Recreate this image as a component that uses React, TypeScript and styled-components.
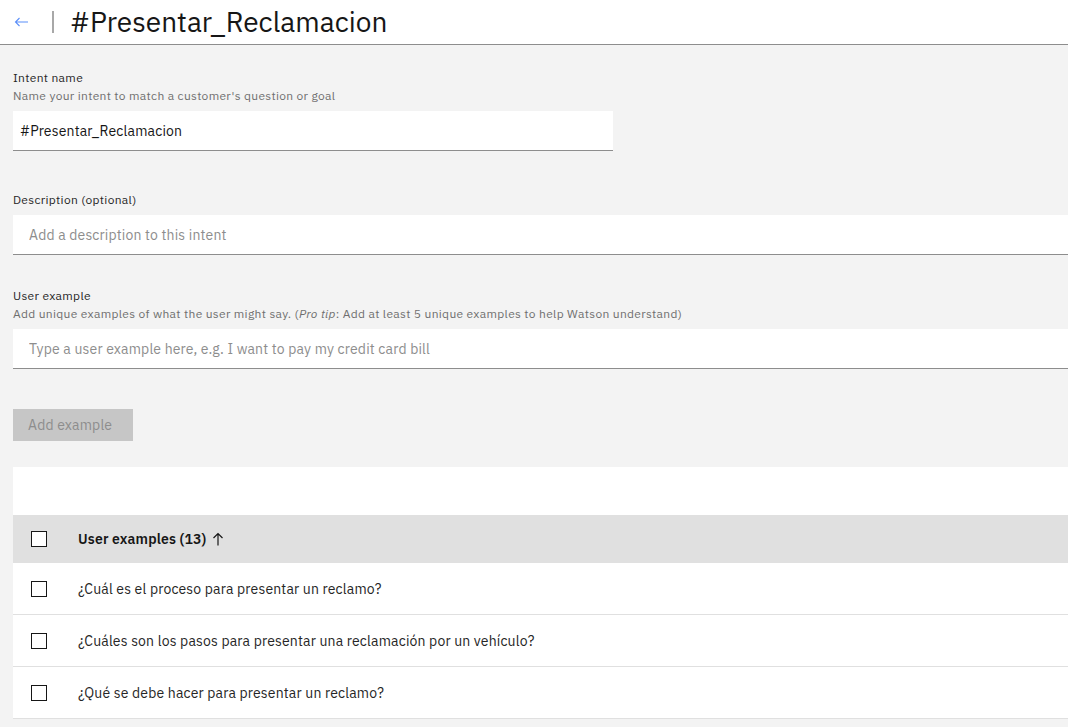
import React from "react";
import styled, { createGlobalStyle } from "styled-components";

const Global = createGlobalStyle`
  html, body { margin: 0; padding: 0; }
  body {
    background: #f3f3f3;
    font-family: "IBM Plex Sans", "Noto Sans", Roboto, sans-serif;
    color: #161616;
    overflow: hidden;
  }
  * { box-sizing: border-box; }
`;

const Header = styled.header`
  height: 45px;
  background: #ffffff;
  border-bottom: 1px solid #8d8d8d;
  display: flex;
  align-items: center;
`;

const BackButton = styled.button`
  border: none;
  background: transparent;
  padding: 0;
  margin-left: 13px;
  width: 16px;
  height: 16px;
  display: flex;
  align-items: center;
  justify-content: center;
  cursor: pointer;
`;

const Divider = styled.span`
  width: 2px;
  height: 22px;
  background: #a8a8a8;
  margin: 0 16px 0 23px;
`;

const Title = styled.h1`
  margin: 0;
  font-size: 28px;
  font-weight: 400;
  letter-spacing: 0;
  color: #161616;
  line-height: 36px;
`;

const Main = styled.main`
  padding: 25px 0 0 13px;
  display: flex;
  flex-direction: column;
`;

const Field = styled.section<{ $top: number }>`
  margin-top: ${(p) => p.$top}px;
  display: flex;
  flex-direction: column;
`;

const Label = styled.label`
  font-size: 12px;
  line-height: 16px;
  letter-spacing: 0.32px;
  color: #262626;
`;

const Helper = styled.div`
  font-size: 12px;
  line-height: 16px;
  letter-spacing: 0.32px;
  color: #6f6f6f;
  margin-top: 2px;
`;

const Input = styled.input<{ $width?: string }>`
  margin-top: 7px;
  width: ${(p) => p.$width || "calc(100% + 20px)"};
  height: 40px;
  border: none;
  border-bottom: 1px solid #8d8d8d;
  background: #ffffff;
  font-family: inherit;
  font-size: 14px;
  letter-spacing: 0.16px;
  color: #161616;
  padding: 0 16px;
  outline: none;
  &::placeholder { color: #8d8d8d; }
`;

const NameInput = styled(Input)`
  padding: 0 7px;
`;

const AddButton = styled.button`
  margin-top: 40px;
  width: 120px;
  height: 32px;
  border: none;
  background: #c6c6c6;
  color: #8d8d8d;
  font-family: inherit;
  font-size: 14px;
  letter-spacing: 0.16px;
  text-align: left;
  padding: 0 15px;
`;

const Table = styled.div`
  margin-top: 26px;
  background: #ffffff;
  width: calc(100% + 20px);
`;

const Toolbar = styled.div`
  height: 48px;
`;

const Row = styled.div<{ $head?: boolean }>`
  display: flex;
  align-items: center;
  height: ${(p) => (p.$head ? 48 : 52)}px;
  background: ${(p) => (p.$head ? "#e0e0e0" : "#ffffff")};
  border-bottom: ${(p) => (p.$head ? "none" : "1px solid #e0e0e0")};
  font-size: 14px;
  letter-spacing: 0.16px;
  font-weight: ${(p) => (p.$head ? 600 : 400)};
  color: ${(p) => (p.$head ? "#161616" : "#262626")};
`;

const CheckCell = styled.div`
  width: 65px;
  padding-left: 18px;
  display: flex;
  align-items: center;
`;

const Box = styled.span`
  width: 16px;
  height: 16px;
  border: 1px solid #161616;
  background: #ffffff;
  display: inline-block;
`;

const HeadText = styled.span`
  display: inline-flex;
  align-items: center;
  gap: 6px;
`;

const examples = [
  "¿Cuál es el proceso para presentar un reclamo?",
  "¿Cuáles son los pasos para presentar una reclamación por un vehículo?",
  "¿Qué se debe hacer para presentar un reclamo?",
];

export default function App() {
  return (
    <>
      <Global />
      <Header>
        <BackButton aria-label="Back">
          <svg width="15" height="10" viewBox="0 0 15 10" fill="none">
            <path d="M14 5H1.5M5.5 1L1.5 5l4 4" stroke="#5b8ff9" strokeWidth="1.1" />
          </svg>
        </BackButton>
        <Divider />
        <Title>#Presentar_Reclamacion</Title>
      </Header>
      <Main>
        <Field $top={0}>
          <Label>Intent name</Label>
          <Helper>Name your intent to match a customer's question or goal</Helper>
          <NameInput $width="600px" defaultValue="#Presentar_Reclamacion" />
        </Field>
        <Field $top={41}>
          <Label>Description (optional)</Label>
          <Input placeholder="Add a description to this intent" />
        </Field>
        <Field $top={33}>
          <Label>User example</Label>
          <Helper>
            Add unique examples of what the user might say. (<i>Pro tip</i>: Add at least 5 unique
            examples to help Watson understand)
          </Helper>
          <Input placeholder="Type a user example here, e.g. I want to pay my credit card bill" />
        </Field>
        <div>
          <AddButton disabled>Add example</AddButton>
        </div>
        <Table>
          <Toolbar />
          <Row $head>
            <CheckCell>
              <Box />
            </CheckCell>
            <HeadText>
              User examples (13)
              <svg width="12" height="14" viewBox="0 0 12 14" fill="none">
                <path d="M6 13.5V1.5M1.5 6L6 1.5 10.5 6" stroke="#161616" strokeWidth="1.2" />
              </svg>
            </HeadText>
          </Row>
          {examples.map((e) => (
            <Row key={e}>
              <CheckCell>
                <Box />
              </CheckCell>
              <span>{e}</span>
            </Row>
          ))}
        </Table>
      </Main>
    </>
  );
}
